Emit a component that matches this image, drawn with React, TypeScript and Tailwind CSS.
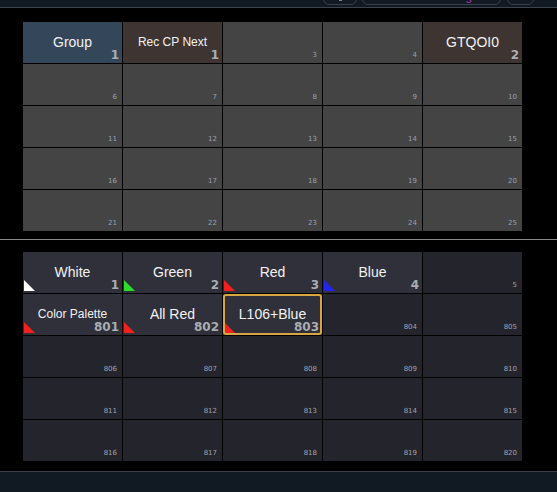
import React from 'react';

type Cell = {
    label?: string;
    num?: string;
    small?: string;
    bg?: string;
    tri?: string;
    size?: number;
    selected?: boolean;
};

const TOP_GRAY = '#444444';
const DARK = '#24242c';
const LIT = '#30303a';

const topCells: Cell[] = [
    { label: 'Group', num: '1', bg: '#34475a' },
    { label: 'Rec CP Next', num: '1', bg: '#3e3533', size: 12 },
    { small: '3' },
    { small: '4' },
    { label: 'GTQOI0', num: '2', bg: '#3e3533' },
    ...Array.from({ length: 20 }, (_, i) => ({ small: String(i + 6) })),
];

const bottomCells: Cell[] = [
    { label: 'White', num: '1', bg: LIT, tri: '#ffffff' },
    { label: 'Green', num: '2', bg: LIT, tri: '#2bdc2b' },
    { label: 'Red', num: '3', bg: LIT, tri: '#f42020' },
    { label: 'Blue', num: '4', bg: LIT, tri: '#2424f0' },
    { small: '5', bg: DARK },
    { label: 'Color Palette', num: '801', bg: LIT, tri: '#f42020', size: 12 },
    { label: 'All Red', num: '802', bg: LIT, tri: '#f42020' },
    { label: 'L106+Blue', num: '803', bg: LIT, tri: '#f42020', selected: true },
    ...Array.from({ length: 17 }, (_, i) => ({ small: String(i + 804), bg: DARK })),
];

function Tile({ cell, smallColor, fallback }: { cell: Cell; smallColor: string; fallback: string }) {
    return (
        <div
            className="relative h-[41px] flex items-center justify-center pb-[2px]"
            style={{ backgroundColor: cell.bg ?? fallback }}
        >
            {cell.label ? (
                <span
                    className="text-[#f2f2f2] leading-[16px] font-['Liberation_Sans',Arial,sans-serif]"
                    style={{ fontSize: cell.size ?? 14 }}
                >
                    {cell.label}
                </span>
            ) : null}

            {cell.num ? (
                <span className="absolute right-[3px] bottom-[2px] text-[12px] leading-[12px] font-bold text-[#a9adb3] font-['DejaVu_Sans',sans-serif]">
                    {cell.num}
                </span>
            ) : null}

            {cell.small ? (
                <span
                    className="absolute right-[5px] bottom-[4px] text-[7px] leading-[7px] font-['DejaVu_Sans',sans-serif]"
                    style={{ color: smallColor }}
                >
                    {cell.small}
                </span>
            ) : null}

            {cell.tri ? (
                <svg className="absolute left-[1px] bottom-[2px]" width="11" height="11" viewBox="0 0 11 11">
                    <polygon points="0,0 0,11 11,11" fill={cell.tri} />
                </svg>
            ) : null}

            {cell.selected ? (
                <div className="absolute inset-0 border-2 border-[#d8a540] rounded-[3px] pointer-events-none" />
            ) : null}
        </div>
    );
}

export default function App() {
    return (
        <div className="w-[557px] h-[492px] bg-black flex flex-col overflow-hidden">
            {/* верхняя панель */}
            <div className="h-[8px] shrink-0 bg-[#111a23] border-b border-[#3d434a] overflow-hidden flex justify-end items-end pr-[23px] pb-[2px]">
                <div className="w-[34px] h-[20px] shrink-0 rounded-[6px] border border-[#3a414b] flex justify-center items-end pb-[3px]">
                    <div className="w-[3px] h-[2px] bg-[#7a8088]" />
                </div>
                <div className="ml-[5px] w-[139px] h-[20px] shrink-0 rounded-[6px] border border-[#3a414b] flex justify-end items-end pr-[28px]">
                    <span className="mb-[2px] text-[12px] leading-[12px] text-[#b02cb0] font-['Liberation_Sans',sans-serif]">
                        g
                    </span>
                </div>
                <div className="ml-[6px] w-[27px] h-[20px] shrink-0 rounded-[6px] border border-[#3a414b]" />
            </div>

            <div className="mt-[14px] ml-[23px] w-[499px] grid grid-cols-5 gap-px">
                {topCells.map((c, i) => (
                    <Tile key={i} cell={c} smallColor="#93a3b6" fallback={TOP_GRAY} />
                ))}
            </div>

            <div className="mt-[8px] h-px bg-[#8a8a8e]" />

            <div className="mt-[12px] ml-[23px] w-[499px] grid grid-cols-5 gap-px">
                {bottomCells.map((c, i) => (
                    <Tile key={i} cell={c} smallColor="#a2a3ac" fallback={DARK} />
                ))}
            </div>

            <div className="mt-[10px] flex-1 bg-[#111a23] border-t border-[#3c4046]" />
        </div>
    );
}
